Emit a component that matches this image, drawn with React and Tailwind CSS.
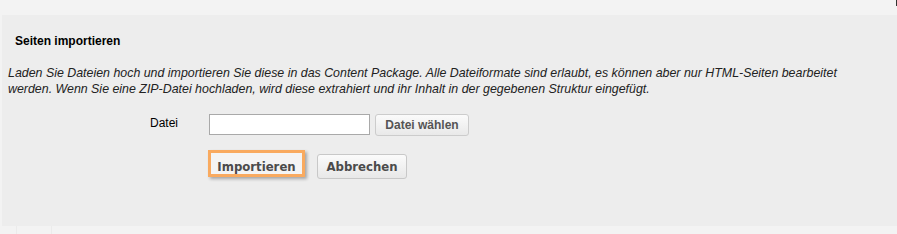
import React from "react";

function App() {
  return (
    <div className="w-[897px] h-[234px] bg-[#f3f3f3] flex flex-col overflow-hidden" style={{ fontFamily: '"Liberation Sans", Arial, sans-serif' }}>
      <div className="h-[15px] flex justify-end">
        <div className="w-[1px] h-[6px] bg-[#333]" />
      </div>
      <div className="ml-[2px] h-[211px] bg-[#ededed] flex flex-col">
        <h2 className="mt-[19px] ml-[13px] text-[12px] leading-[14px] font-bold text-black">
          Seiten importieren
        </h2>
        <p className="mt-[17px] ml-[6px] w-[850px] text-[12.4px] leading-[16px] italic text-[#222]">
          Laden Sie Dateien hoch und importieren Sie diese in das Content Package. Alle Dateiformate sind erlaubt, es können aber nur HTML-Seiten bearbeitet werden. Wenn Sie eine ZIP-Datei hochladen, wird diese extrahiert und ihr Inhalt in der gegebenen Struktur eingefügt.
        </p>

        <div className="mt-[17px] flex items-start pl-[148px]">
          <label className="w-[59px] pt-[2px] text-[12px] leading-[14px] text-black">Datei</label>
          <input
            type="text"
            className="w-[161px] h-[21px] bg-white border border-[#a9a9a9] outline-none"
          />
          <button className="ml-[5px] w-[94px] h-[22px] rounded-[3px] border border-[#cccccc] bg-gradient-to-b from-[#fbfbfb] to-[#e9e9e9] text-[12px] font-bold text-[#555]">
            Datei wählen
          </button>
        </div>

        <div className="mt-[14px] flex items-start pl-[206px]">
          <button
            className="w-[97px] h-[27px] pt-[5px] border-[3px] border-[#f9aa5f] bg-[#f4f4f4] shadow-[2px_2px_3px_rgba(0,0,0,0.3)] text-[13px] font-bold text-[#4b4b4b] leading-none"
            style={{ fontFamily: '"DejaVu Sans Condensed", "DejaVu Sans", sans-serif' }}
          >
            Importieren
          </button>
          <button
            className="ml-[12px] mt-[4px] w-[90px] h-[25px] rounded-[3px] border border-[#c8c8c8] bg-gradient-to-b from-[#fbfbfb] to-[#e8e8e8] text-[13px] font-bold text-[#4b4b4b] leading-none"
            style={{ fontFamily: '"DejaVu Sans Condensed", "DejaVu Sans", sans-serif' }}
          >
            Abbrechen
          </button>
        </div>
      </div>
      <div className="flex-1 flex">
        <div className="w-[17px] border-r border-[#ebebeb]" />
        <div className="w-[35px] border-r border-[#ebebeb]" />
      </div>
    </div>
  );
}

export default App;
